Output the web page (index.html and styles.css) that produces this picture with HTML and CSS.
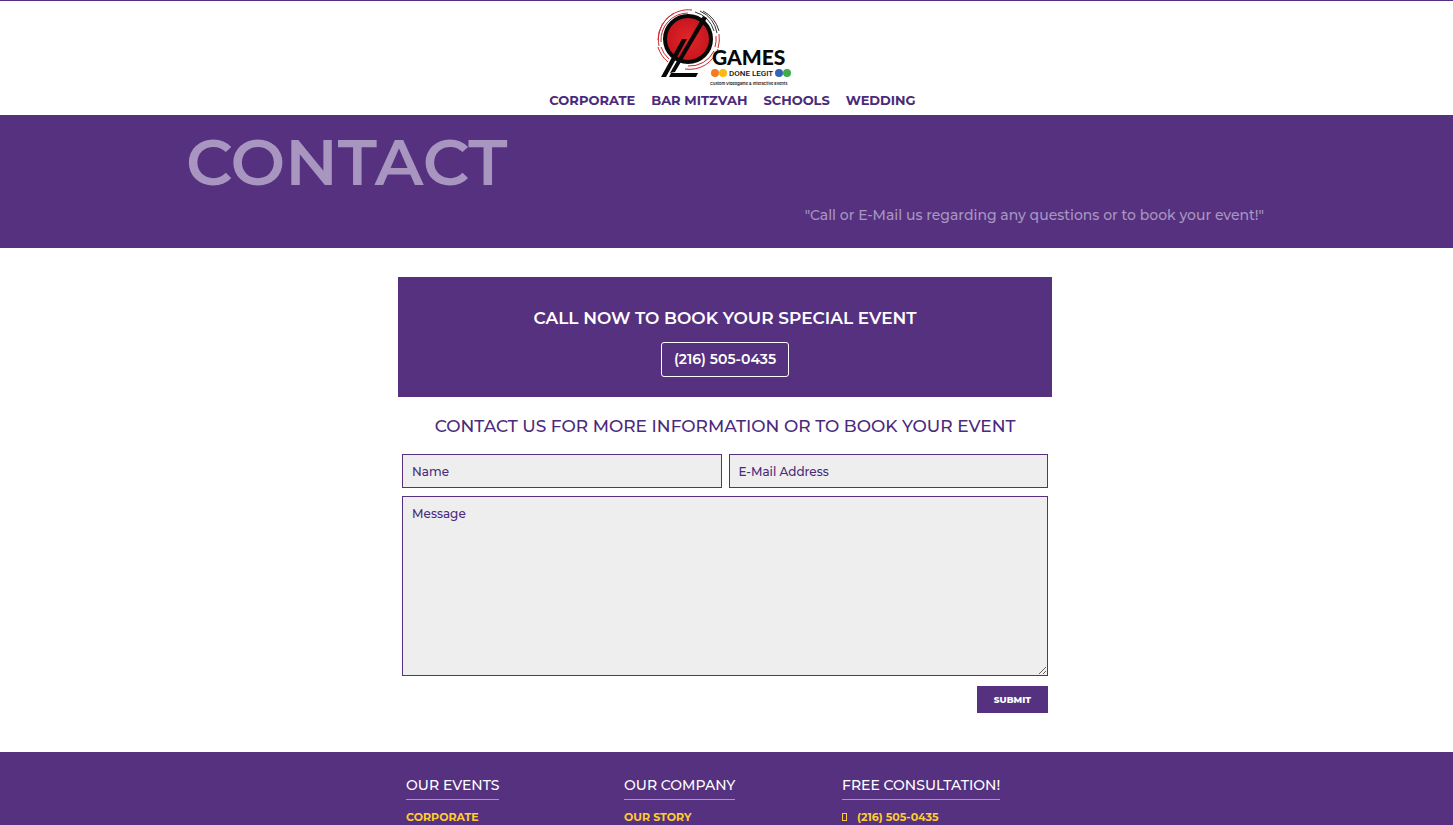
FILE: index.html
```html
<!DOCTYPE html>
<html lang="en">
<head>
  <meta charset="UTF-8">
  <meta name="viewport" content="width=device-width, initial-scale=1">
  <title>Contact | Games Done Legit</title>
  <link rel="stylesheet" href="styles.css">
</head>
<body>
  <header class="site-header">
    <a href="#" class="logo" aria-label="Games Done Legit">
      <svg width="136" height="80" viewBox="0 0 136 80">
        <defs>
          <radialGradient id="disc"><stop offset="0" stop-color="#e3242b"/><stop offset="1" stop-color="#c5161d"/></radialGradient>
        </defs>
        <g fill="none" stroke-width="1">
          <path d="M35 1A30 30 0 0 0 2 37M31 4A27 27 0 0 0 4 33M1 38A31 31 0 0 0 11 53M4 38A28 28 0 0 0 12 50M28 60A30 30 0 0 0 61 40M31 57A27 27 0 0 0 57 42" stroke="#c9282d"/>
          <path d="M46 2A32 32 0 0 1 62 22M43 2A30 30 0 0 1 60 24M38 3A27 27 0 0 1 57 22" stroke="#333"/>
          <path d="M1 31A31 31 0 0 1 17 4M62 25A31 31 0 0 1 61 39M59 27A28 28 0 0 1 58 38" stroke="#c9282d"/>
        </g>
        <circle cx="31" cy="30" r="23" fill="url(#disc)" stroke="#080808" stroke-width="4"/>
        <path d="M46 7L50 9L18 63L13 64Z" fill="#080808"/>
        <path d="M25 30H30L9 68H4Z" fill="#080808"/>
        <path d="M14 64H41L39 68H12Z" fill="#080808"/>
        <text x="55" y="56" class="logo-name">GAMES</text>
        <circle cx="58" cy="64" r="4" fill="#f47b20"/>
        <circle cx="66" cy="64" r="4" fill="#fdb913"/>
        <text x="72" y="67" class="logo-sub">DONE LEGIT</text>
        <circle cx="122" cy="64" r="4" fill="#3465b0"/>
        <circle cx="130" cy="64" r="4" fill="#3fae49"/>
        <text x="53" y="76" class="logo-small">Custom Videogame &amp; Interactive Events</text>
      </svg>
    </a>
    <nav class="main-nav">
      <a href="#">CORPORATE</a>
      <a href="#">BAR MITZVAH</a>
      <a href="#">SCHOOLS</a>
      <a href="#">WEDDING</a>
    </nav>
  </header>

  <section class="hero">
    <div class="hero-inner">
      <h1>CONTACT</h1>
      <p>"Call or E-Mail us regarding any questions or to book your event!"</p>
    </div>
  </section>

  <main class="content">
    <section class="call-box">
      <h2>CALL NOW TO BOOK YOUR SPECIAL EVENT</h2>
      <a href="tel:2165050435" class="phone-button">(216) 505-0435</a>
    </section>

    <form class="contact-form">
      <h2>CONTACT US FOR MORE INFORMATION OR TO BOOK YOUR EVENT</h2>
      <div class="form-row">
        <input type="text" name="name" placeholder="Name" aria-label="Name">
        <input type="email" name="email" placeholder="E-Mail Address" aria-label="E-Mail Address">
      </div>
      <textarea name="message" placeholder="Message" aria-label="Message"></textarea>
      <button type="submit">SUBMIT</button>
    </form>
  </main>

  <footer class="site-footer">
    <div class="footer-inner">
      <div class="footer-column">
        <h3>OUR EVENTS</h3>
        <a href="#">CORPORATE</a>
      </div>
      <div class="footer-column">
        <h3>OUR COMPANY</h3>
        <a href="#">OUR STORY</a>
      </div>
      <div class="footer-column">
        <h3>FREE CONSULTATION!</h3>
        <a href="tel:2165050435"><span class="phone-icon"></span>(216) 505-0435</a>
      </div>
    </div>
  </footer>
</body>
</html>
```
FILE: styles.css
```css
* {
  box-sizing: border-box;
}
body {
  margin: 0;
  min-height: 100vh;
  display: flex;
  flex-direction: column;
  font-family: Montserrat, Inter, sans-serif;
  color: #4b2a7b;
  background: #fff;
}
h1, h2, h3, p {
  margin: 0;
}
a {
  text-decoration: none;
}

/* header */
.site-header {
  display: flex;
  flex-direction: column;
  align-items: center;
  border-top: 1px solid #553180;
  padding-top: 8px;
}
.logo {
  display: block;
  height: 80px;
  padding-right: 4px;
}
.logo svg {
  display: block;
}
.logo-name {
  font: 900 21px Lato, sans-serif;
  fill: #080808;
}
.logo-sub {
  font: 500 8px Roboto, sans-serif;
  fill: #111;
}
.logo-small {
  font: 600 4px Inter, sans-serif;
  fill: #111;
}
.main-nav {
  display: flex;
  gap: 16px;
  padding-left: 12px;
  height: 26px;
}
.main-nav a {
  color: #4b2a7b;
  font-size: 13px;
  font-weight: 700;
  line-height: 22px;
}

/* hero */
.hero {
  background: #553180;
  color: #a996c0;
}
.hero-inner {
  width: 74.2%;
  margin-left: 12.8%;
  padding: 8px 0 20px;
}
.hero h1 {
  margin-bottom: 2px;
  font-size: 65px;
  font-weight: 600;
  line-height: 78px;
}
.hero p {
  font-size: 14px;
  font-weight: 500;
  line-height: 25px;
  text-align: right;
}

/* content */
.content {
  width: 45%;
  margin-left: 27.4%;
  padding: 29px 0 39px;
}
.call-box {
  display: flex;
  flex-direction: column;
  align-items: center;
  gap: 12px;
  padding: 29px 0 20px;
  background: #553180;
}
.call-box h2 {
  color: #fff;
  font-size: 17px;
  font-weight: 600;
  line-height: 24px;
}
.phone-button {
  padding: 0 12px;
  border: 1px solid #fff;
  border-radius: 3px;
  color: #fff;
  font-size: 14px;
  font-weight: 600;
  line-height: 33px;
}
.contact-form {
  display: flex;
  flex-direction: column;
  padding: 17px 4px 0;
}
.contact-form h2 {
  margin-bottom: 15px;
  font-size: 17px;
  font-weight: 500;
  line-height: 25px;
  text-align: center;
}
.form-row {
  display: flex;
  gap: 7px;
  margin-bottom: 8px;
}
.contact-form input,
.contact-form textarea {
  width: 100%;
  border: 1px solid #553180;
  border-radius: 0;
  background: #eee;
  color: #4b2a7b;
  font-family: inherit;
  font-size: 12px;
  font-weight: 500;
}
.contact-form input {
  height: 34px;
  padding: 0 9px;
}
.contact-form textarea {
  display: block;
  height: 180px;
  padding: 9px;
}
.contact-form ::placeholder {
  color: #4b2a7b;
  opacity: 1;
}
.contact-form button {
  align-self: flex-end;
  margin-top: 10px;
  padding: 0 17px;
  border: none;
  background: #553180;
  color: #fff;
  font-family: inherit;
  font-size: 9px;
  font-weight: 800;
  line-height: 27px;
  cursor: pointer;
}

/* footer */
.site-footer {
  flex: 1;
  background: #553180;
}
.footer-inner {
  display: grid;
  grid-template-columns: repeat(3, 1fr);
  width: 45%;
  margin-left: 27.4%;
  padding-top: 20px;
}
.footer-column {
  display: flex;
  flex-direction: column;
  align-items: flex-start;
  gap: 9px;
  padding-left: 8px;
}
.footer-column h3 {
  padding-bottom: 1px;
  border-bottom: 1px solid #a996c0;
  color: #fff;
  font-size: 14px;
  font-weight: 500;
  line-height: 26px;
}
.footer-column a {
  color: #fc3;
  font-size: 11px;
  font-weight: 700;
  line-height: 16px;
}
.phone-icon {
  display: inline-block;
  width: 5px;
  height: 8px;
  margin-right: 10px;
  border: 1px solid #fc3;
}
```
